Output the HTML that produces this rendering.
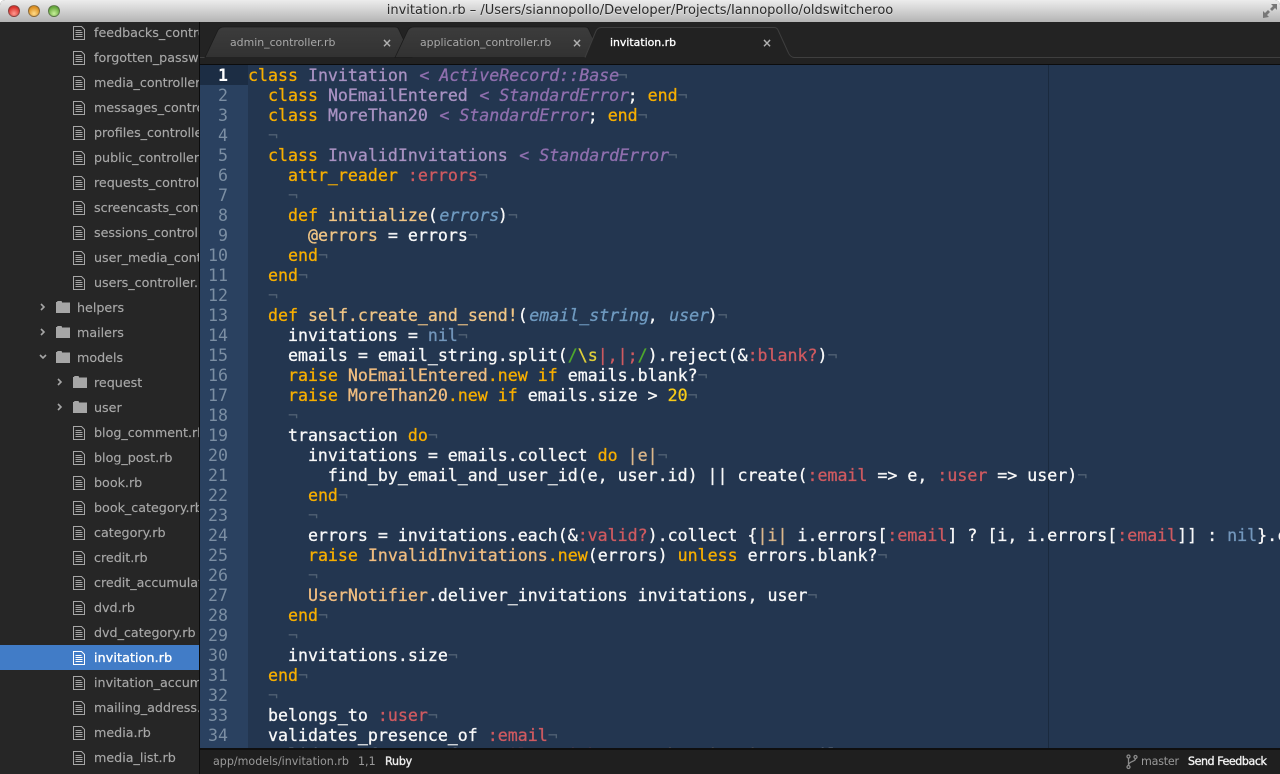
<!DOCTYPE html>
<html><head><meta charset="utf-8"><title>invitation.rb</title>
<style>
*{box-sizing:border-box;margin:0;padding:0}
html,body{width:1280px;height:774px;overflow:hidden;background:#fff}
#win{position:absolute;left:0;top:0;width:1280px;height:774px;overflow:hidden;background:#262626;border-radius:5px 5px 0 0}
#title{position:absolute;left:0;top:0;width:1280px;height:22px;background:linear-gradient(#ececec,#d6d6d6 40%,#b4b4b4);}
#title div.t{position:absolute;left:0;top:0;width:1280px;text-align:center;font:13px/22px "DejaVu Sans",sans-serif;color:#2a2a2a;text-shadow:0 1px 0 rgba(255,255,255,.4)}
.tl{position:absolute;top:5px;width:12px;height:12px;border-radius:50%;border:1px solid rgba(70,70,70,.55)}
#side{position:absolute;left:0;top:22px;width:199px;height:752px;background:#262626;overflow:hidden}
.r{position:absolute;left:0;width:199px;height:25px;font:12.7px/24px "DejaVu Sans",sans-serif;color:#a8a8a8;white-space:nowrap;overflow:hidden;-webkit-text-stroke:.15px #a8a8a8}
.r span{position:absolute;left:94px;top:1px}
.r.d span{left:77px}.r.d2 span{left:94px}
.r.sel{background:#417cc7;color:#fff;-webkit-text-stroke:.35px #fff;letter-spacing:.1px}
.r svg{position:absolute;left:0;top:0}
.r use[href="#f"]{transform:translateY(1px)}
#vl{position:absolute;left:199px;top:22px;width:1px;height:752px;background:#0c0c0c}
#tabs{position:absolute;left:200px;top:22px;width:1080px;height:43px;background:#232323;font:10.9px/16px "DejaVu Sans",sans-serif;color:#a8a8a8}
#tabs svg{position:absolute;left:0;top:0}
#tabs span{position:absolute;top:13px;white-space:nowrap}
#tabs b.x{position:absolute;top:13px;font:bold 12px/16px "DejaVu Sans",sans-serif;color:#b0b0b0}
#ed{position:absolute;left:200px;top:65px;width:1080px;height:683px;background:#233650;overflow:hidden}
#gut{position:absolute;left:0;top:0;width:48px;height:683px;background:#2a4160}
#act{position:absolute;left:0;top:0;width:48px;height:20px;background:#1c2d44}
#ruler{position:absolute;left:848px;top:0;width:1px;height:683px;background:#1a2a3e}
.n{position:absolute;left:0;width:28px;margin-top:1px;text-align:right;font:16.6px/20px "DejaVu Sans Mono",monospace;color:#7b8ea3}
.l{position:absolute;left:48px;margin-top:1px;white-space:pre;font:16.6px/20px "DejaVu Sans Mono",monospace;color:#f8f8f8;-webkit-text-stroke:.3px}
.k{color:#f7ae00}.c{color:#a992c2}.h{color:#8f6fae;font-style:italic;position:relative;left:1.5px}.s{color:#cf5a60}.p{color:#6f9ac0;font-style:italic;position:relative;left:1.5px}
.u{color:#7397bc}.m{color:#f7ca18}.g{color:#4ea82d}.y{color:#e0cf3a}.e{color:#4f6072;-webkit-text-stroke:0}.t2{color:#f0bd80}.b{color:#dcb78a}.f{color:#f0c585}
#st{position:absolute;left:200px;top:748px;width:1080px;height:26px;background:#1f1f1f;border-top:2px solid #0f0f0f;font:11.1px/23px "DejaVu Sans",sans-serif;color:#9a9a9a}
#st span{position:absolute;top:0;white-space:nowrap}
</style></head><body>
<svg width="0" height="0" style="position:absolute"><defs>
<g id="f" fill="none" stroke="currentColor"><path d="M.5.5h8l3 3v10H.5z"/><path d="M2.5 4.500h6M2.500 6.500h7M2.500 8.500h7M2.500 10.500h7" stroke-width="1"/></g>
<g id="fo" fill="#a6a6a6" stroke="none"><path d="M0 2h1q0-1 1-1h3q1 0 1 1v.5h8V13H0z"/></g>
<g id="ar" fill="none" stroke="#a6a6a6" stroke-width="1.600"><path d="M1 1l3 3-3 3"/></g>
<g id="ad" fill="none" stroke="#a6a6a6" stroke-width="1.600"><path d="M1 1l3 3 3-3"/></g>
</defs></svg>
<div id="win">
<div id="title">
<div class="tl" style="left:8px;background:radial-gradient(circle at 50% 75%,#ff9a90,#d9322c 70%)"></div>
<div class="tl" style="left:28px;background:radial-gradient(circle at 50% 75%,#ffdc8a,#dd8f20 70%)"></div>
<div class="tl" style="left:48px;background:radial-gradient(circle at 50% 75%,#c8f09a,#66a83c 70%)"></div>
<div class="t">invitation.rb – /Users/siannopollo/Developer/Projects/Iannopollo/oldswitcheroo</div>
<svg width="16" height="16" style="position:absolute;left:1262px;top:3px"><path d="M9 1h6v6l-2-2-3 3-2-2 3-3zM1 15V8l2 2 3-3 2 2-3 3 2 2z" fill="#777"/></svg>
</div>
<div id="side">
<div class="r" style="top:-2px"><svg width="100" height="25" style="color:#a6a6a6"><use href="#f" x="73" y="5"/></svg><span>feedbacks_controller.rb</span></div>
<div class="r" style="top:23px"><svg width="100" height="25" style="color:#a6a6a6"><use href="#f" x="73" y="5"/></svg><span>forgotten_passwords_controller.rb</span></div>
<div class="r" style="top:48px"><svg width="100" height="25" style="color:#a6a6a6"><use href="#f" x="73" y="5"/></svg><span>media_controller.rb</span></div>
<div class="r" style="top:73px"><svg width="100" height="25" style="color:#a6a6a6"><use href="#f" x="73" y="5"/></svg><span>messages_controller.rb</span></div>
<div class="r" style="top:98px"><svg width="100" height="25" style="color:#a6a6a6"><use href="#f" x="73" y="5"/></svg><span>profiles_controller.rb</span></div>
<div class="r" style="top:123px"><svg width="100" height="25" style="color:#a6a6a6"><use href="#f" x="73" y="5"/></svg><span>public_controller.rb</span></div>
<div class="r" style="top:148px"><svg width="100" height="25" style="color:#a6a6a6"><use href="#f" x="73" y="5"/></svg><span>requests_controller.rb</span></div>
<div class="r" style="top:173px"><svg width="100" height="25" style="color:#a6a6a6"><use href="#f" x="73" y="5"/></svg><span>screencasts_controller.rb</span></div>
<div class="r" style="top:198px"><svg width="100" height="25" style="color:#a6a6a6"><use href="#f" x="73" y="5"/></svg><span>sessions_controller.rb</span></div>
<div class="r" style="top:223px"><svg width="100" height="25" style="color:#a6a6a6"><use href="#f" x="73" y="5"/></svg><span>user_media_controller.rb</span></div>
<div class="r" style="top:248px"><svg width="100" height="25" style="color:#a6a6a6"><use href="#f" x="73" y="5"/></svg><span>users_controller.rb</span></div>
<div class="r d" style="top:273px"><svg width="100" height="25"><use href="#ar" x="40" y="8"/><use href="#fo" x="56" y="5"/></svg><span>helpers</span></div>
<div class="r d" style="top:298px"><svg width="100" height="25"><use href="#ar" x="40" y="8"/><use href="#fo" x="56" y="5"/></svg><span>mailers</span></div>
<div class="r d" style="top:323px"><svg width="100" height="25"><use href="#ad" x="39" y="9"/><use href="#fo" x="56" y="5"/></svg><span>models</span></div>
<div class="r d2" style="top:348px"><svg width="100" height="25"><use href="#ar" x="57" y="8"/><use href="#fo" x="73" y="5"/></svg><span>request</span></div>
<div class="r d2" style="top:373px"><svg width="100" height="25"><use href="#ar" x="57" y="8"/><use href="#fo" x="73" y="5"/></svg><span>user</span></div>
<div class="r" style="top:398px"><svg width="100" height="25" style="color:#a6a6a6"><use href="#f" x="73" y="5"/></svg><span>blog_comment.rb</span></div>
<div class="r" style="top:423px"><svg width="100" height="25" style="color:#a6a6a6"><use href="#f" x="73" y="5"/></svg><span>blog_post.rb</span></div>
<div class="r" style="top:448px"><svg width="100" height="25" style="color:#a6a6a6"><use href="#f" x="73" y="5"/></svg><span>book.rb</span></div>
<div class="r" style="top:473px"><svg width="100" height="25" style="color:#a6a6a6"><use href="#f" x="73" y="5"/></svg><span>book_category.rb</span></div>
<div class="r" style="top:498px"><svg width="100" height="25" style="color:#a6a6a6"><use href="#f" x="73" y="5"/></svg><span>category.rb</span></div>
<div class="r" style="top:523px"><svg width="100" height="25" style="color:#a6a6a6"><use href="#f" x="73" y="5"/></svg><span>credit.rb</span></div>
<div class="r" style="top:548px"><svg width="100" height="25" style="color:#a6a6a6"><use href="#f" x="73" y="5"/></svg><span>credit_accumulator.rb</span></div>
<div class="r" style="top:573px"><svg width="100" height="25" style="color:#a6a6a6"><use href="#f" x="73" y="5"/></svg><span>dvd.rb</span></div>
<div class="r" style="top:598px"><svg width="100" height="25" style="color:#a6a6a6"><use href="#f" x="73" y="5"/></svg><span>dvd_category.rb</span></div>
<div class="r sel" style="top:623px"><svg width="100" height="25" style="color:#fff"><use href="#f" x="73" y="5"/></svg><span>invitation.rb</span></div>
<div class="r" style="top:648px"><svg width="100" height="25" style="color:#a6a6a6"><use href="#f" x="73" y="5"/></svg><span>invitation_accumulator.rb</span></div>
<div class="r" style="top:673px"><svg width="100" height="25" style="color:#a6a6a6"><use href="#f" x="73" y="5"/></svg><span>mailing_address.rb</span></div>
<div class="r" style="top:698px"><svg width="100" height="25" style="color:#a6a6a6"><use href="#f" x="73" y="5"/></svg><span>media.rb</span></div>
<div class="r" style="top:723px"><svg width="100" height="25" style="color:#a6a6a6"><use href="#f" x="73" y="5"/></svg><span>media_list.rb</span></div>
</div>
<div id="vl"></div>
<div id="tabs">
<svg width="1080" height="43">
<defs><linearGradient id="tg" x1="0" y1="0" x2="0" y2="1"><stop offset="0" stop-color="#3c3c3c"/><stop offset="1" stop-color="#323232"/></linearGradient></defs>
<rect x="0" y="35" width="1080" height="1" fill="#3f3f3f"/>
<rect x="0" y="36" width="1080" height="6" fill="#222"/>
<rect x="0" y="42" width="1080" height="1" fill="#0c0c0c"/>
<path d="M5 35.500L18 8Q20 5 24 5H195Q198 5 199 8L212 35.500Z" fill="url(#tg)" stroke="#1b1b1b" stroke-width=".8"/>
<path d="M195 35.500L208 8Q210 5 214 5H385Q388 5 389 8L402 35.500Z" fill="url(#tg)" stroke="#1b1b1b" stroke-width=".8"/>
<path d="M385 36L396 9Q398 5 402 5H574Q577 5 578 8L588 30Q590 35 594 36V42H385Z" fill="#222"/>
<path d="M385 35.500L396 9Q398 5 402 5.500H574Q577 5.500 578 8L588 30Q590 35 594 35.500" fill="none" stroke="#3e3e3e"/>
</svg>
<span style="left:30px">admin_controller.rb</span><b class="x" style="left:182px">×</b>
<span style="left:220px">application_controller.rb</span><b class="x" style="left:372px">×</b>
<span style="left:410px;color:#fff;-webkit-text-stroke:.3px #fff">invitation.rb</span><b class="x" style="left:562px">×</b>
</div>
<div id="ed">
<div id="gut"></div><div id="act"></div><div id="ruler"></div>
<div class="n" style="top:0;color:#fff;font-weight:bold">1</div><div class="n" style="top:20px">2</div><div class="n" style="top:40px">3</div><div class="n" style="top:60px">4</div><div class="n" style="top:80px">5</div><div class="n" style="top:100px">6</div><div class="n" style="top:120px">7</div><div class="n" style="top:140px">8</div><div class="n" style="top:160px">9</div><div class="n" style="top:180px">10</div><div class="n" style="top:200px">11</div><div class="n" style="top:220px">12</div><div class="n" style="top:240px">13</div><div class="n" style="top:260px">14</div><div class="n" style="top:280px">15</div><div class="n" style="top:300px">16</div><div class="n" style="top:320px">17</div><div class="n" style="top:340px">18</div><div class="n" style="top:360px">19</div><div class="n" style="top:380px">20</div><div class="n" style="top:400px">21</div><div class="n" style="top:420px">22</div><div class="n" style="top:440px">23</div><div class="n" style="top:460px">24</div><div class="n" style="top:480px">25</div><div class="n" style="top:500px">26</div><div class="n" style="top:520px">27</div><div class="n" style="top:540px">28</div><div class="n" style="top:560px">29</div><div class="n" style="top:580px">30</div><div class="n" style="top:600px">31</div><div class="n" style="top:620px">32</div><div class="n" style="top:640px">33</div><div class="n" style="top:660px">34</div>
<div class="l" style="top:0"><span class="k">class</span> <span class="c">Invitation</span> <span class="h">&lt; ActiveRecord::Base</span><span class="e">¬</span></div>
<div class="l" style="top:20px">  <span class="k">class</span> <span class="c">NoEmailEntered</span> <span class="h">&lt; StandardError</span>; <span class="k">end</span><span class="e">¬</span></div>
<div class="l" style="top:40px">  <span class="k">class</span> <span class="c">MoreThan20</span> <span class="h">&lt; StandardError</span>; <span class="k">end</span><span class="e">¬</span></div>
<div class="l" style="top:60px">  <span class="e">¬</span></div>
<div class="l" style="top:80px">  <span class="k">class</span> <span class="c">InvalidInvitations</span> <span class="h">&lt; StandardError</span><span class="e">¬</span></div>
<div class="l" style="top:100px">    <span class="k">attr_reader</span> <span class="s">:errors</span><span class="e">¬</span></div>
<div class="l" style="top:120px">    <span class="e">¬</span></div>
<div class="l" style="top:140px">    <span class="k">def</span> <span class="f">initialize</span>(<span class="p">errors</span>)<span class="e">¬</span></div>
<div class="l" style="top:160px">      <span class="f">@errors</span> = errors<span class="e">¬</span></div>
<div class="l" style="top:180px">    <span class="k">end</span><span class="e">¬</span></div>
<div class="l" style="top:200px">  <span class="k">end</span><span class="e">¬</span></div>
<div class="l" style="top:220px">  <span class="e">¬</span></div>
<div class="l" style="top:240px">  <span class="k">def</span> <span class="f">self.create_and_send!</span>(<span class="p">email_string</span>, <span class="p">user</span>)<span class="e">¬</span></div>
<div class="l" style="top:260px">    invitations = <span class="u">nil</span><span class="e">¬</span></div>
<div class="l" style="top:280px">    emails = email_string.split(<span class="g">/</span><span class="y">\s</span><span class="s">|,|;</span><span class="g">/</span>).reject(&amp;<span class="s">:blank?</span>)<span class="e">¬</span></div>
<div class="l" style="top:300px">    <span class="k">raise</span> <span class="t2">NoEmailEntered</span><span class="k">.new if</span> emails.blank?<span class="e">¬</span></div>
<div class="l" style="top:320px">    <span class="k">raise</span> <span class="t2">MoreThan20</span><span class="k">.new if</span> emails.size &gt; <span class="m">20</span><span class="e">¬</span></div>
<div class="l" style="top:340px">    <span class="e">¬</span></div>
<div class="l" style="top:360px">    transaction <span class="k">do</span><span class="e">¬</span></div>
<div class="l" style="top:380px">      invitations = emails.collect <span class="k">do</span> <span class="b">|e|</span><span class="e">¬</span></div>
<div class="l" style="top:400px">        find_by_email_and_user_id(e, user.id) || create(<span class="s">:email</span> =&gt; e, <span class="s">:user</span> =&gt; user)<span class="e">¬</span></div>
<div class="l" style="top:420px">      <span class="k">end</span><span class="e">¬</span></div>
<div class="l" style="top:440px">      <span class="e">¬</span></div>
<div class="l" style="top:460px">      errors = invitations.each(&amp;<span class="s">:valid?</span>).collect {<span class="b">|i|</span> i.errors[<span class="s">:email</span>] ? [i, i.errors[<span class="s">:email</span>]] : <span class="u">nil</span>}.compact<span class="e">¬</span></div>
<div class="l" style="top:480px">      <span class="k">raise</span> <span class="t2">InvalidInvitations</span><span class="k">.new</span>(errors) <span class="k">unless</span> errors.blank?<span class="e">¬</span></div>
<div class="l" style="top:500px">      <span class="e">¬</span></div>
<div class="l" style="top:520px">      <span class="t2">UserNotifier</span>.deliver_invitations invitations, user<span class="e">¬</span></div>
<div class="l" style="top:540px">    <span class="k">end</span><span class="e">¬</span></div>
<div class="l" style="top:560px">    <span class="e">¬</span></div>
<div class="l" style="top:580px">    invitations.size<span class="e">¬</span></div>
<div class="l" style="top:600px">  <span class="k">end</span><span class="e">¬</span></div>
<div class="l" style="top:620px">  <span class="e">¬</span></div>
<div class="l" style="top:640px">  belongs_to <span class="s">:user</span><span class="e">¬</span></div>
<div class="l" style="top:660px">  validates_presence_of <span class="s">:email</span><span class="e">¬</span></div>
<div class="l" style="top:680px">  validates_format_of <span class="s">:email</span>, <span class="s">:with</span> =&gt; <span class="t2">Authentication</span>.email_regex</div>
</div>
<div id="st">
<span style="left:13px">app/models/invitation.rb</span>
<span style="left:158px">1,1</span>
<span style="left:185px;color:#eee;-webkit-text-stroke:.35px #eee;letter-spacing:-.2px">Ruby</span>
<svg width="14" height="16" style="position:absolute;left:926px;top:4px"><g fill="none" stroke="#8a8a8a" stroke-width="1.300"><circle cx="2.500" cy="2.500" r="1.500"/><circle cx="2.500" cy="13" r="1.500"/><circle cx="9.500" cy="3" r="1.500"/><path d="M2.500 4v7.500M9.500 4.500C9.500 8 3 7 2.500 11"/></g></svg>
<span style="left:941px;letter-spacing:-.2px">master</span>
<span style="left:988px;color:#f2f2f2;-webkit-text-stroke:.35px #f2f2f2;letter-spacing:-.45px">Send Feedback</span>
</div>
</div>
</body></html>
